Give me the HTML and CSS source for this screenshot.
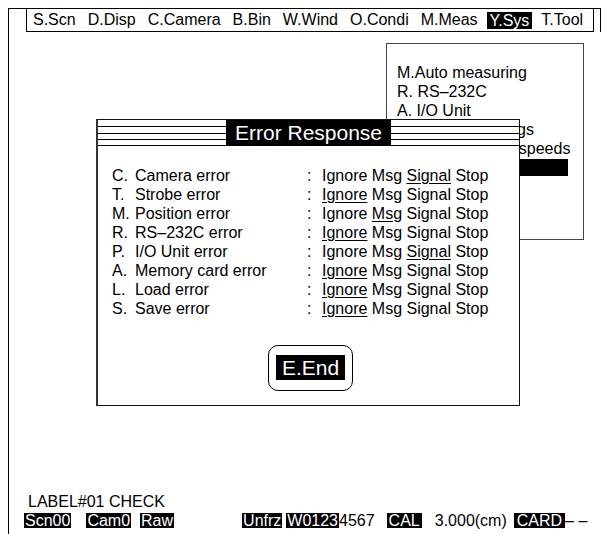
FILE: index.html
```html
<!DOCTYPE html>
<html lang="en">
  <head>
    <meta charset="UTF-8" />
    <meta name="viewport" content="width=device-width, initial-scale=1.0" />
    <title>Error Response</title>
    <link rel="stylesheet" href="styles.css">
  </head>
  <body>
    <div class="screen">
      <div class="header">
        <div class="menu">
          <span>S.Scn</span>
          <span>D.Disp</span>
          <span>C.Camera</span>
          <span>B.Bin</span>
          <span>W.Wind</span>
          <span>O.Condi</span>
          <span>M.Meas</span>
          <span class="active">Y.Sys</span>
          <span>T.Tool</span>
        </div>
      </div>

      <!-- system submenu, partly under the dialog -->
      <div class="submenu">
        <div>M.Auto measuring</div>
        <div>R. RS–232C</div>
        <div>A. I/O Unit</div>
        <div>C. Camera settings</div>
        <div>W. Transmission speeds</div>
        <div class="selected"></div>
      </div>

      <div class="dialog">
        <div class="title-bar">
          <span class="title">Error Response</span>
        </div>
        <div class="dialog-body">
          <div class="rows">
            <span>C.</span><span>Camera error</span><span>:</span>
            <span>Ignore Msg <u>Signal</u> Stop</span>

            <span>T.</span><span>Strobe error</span><span>:</span>
            <span><u>Ignore</u> Msg Signal Stop</span>

            <span>M.</span><span>Position error</span><span>:</span>
            <span>Ignore <u>Msg</u> Signal Stop</span>

            <span>R.</span><span>RS–232C error</span><span>:</span>
            <span><u>Ignore</u> Msg Signal Stop</span>

            <span>P.</span><span>I/O Unit error</span><span>:</span>
            <span>Ignore Msg <u>Signal</u> Stop</span>

            <span>A.</span><span>Memory card error</span><span>:</span>
            <span><u>Ignore</u> Msg Signal Stop</span>

            <span>L.</span><span>Load error</span><span>:</span>
            <span><u>Ignore</u> Msg Signal Stop</span>

            <span>S.</span><span>Save error</span><span>:</span>
            <span><u>Ignore</u> Msg Signal Stop</span>
          </div>
          <div class="actions">
            <div class="end-button"><span>E.End</span></div>
          </div>
        </div>
      </div>

      <div class="status">
        <div class="status-label">LABEL#01 CHECK</div>
        <div class="status-tags">
          <span class="tag scn">Scn00</span>
          <span class="tag cam">Cam0</span>
          <span class="tag raw">Raw</span>
          <span class="tag unfrz">Unfrz</span>
          <span class="tag win">W0123</span><span>4567</span>
          <span class="tag cal">CAL</span>
          <span class="value">3.000(cm)</span>
          <span class="tag card">CARD</span><span>– –</span>
        </div>
      </div>
    </div>
  </body>
</html>
```

FILE: styles.css
```css
body {
  margin: 0;
  background-color: #fff;
  color: #000;
  font-family: "Liberation Sans", Arial, sans-serif;
  font-size: 16px;
}
.screen {
  position: relative;
  display: flex;
  flex-direction: column;
  box-sizing: border-box;
  margin: 8px 0 0 8px;
  width: 593px;
  height: 526px;
  border-top: 1px solid #000;
  border-left: 1px solid #000;
}

/* top menu */
.header {
  height: 23px;
  border-right: 1px solid #000;
}
.menu {
  display: flex;
  align-items: center;
  gap: 12px;
  box-sizing: border-box;
  margin-left: 17px;
  width: 568px;
  height: 23px;
  padding-left: 6px;
  border: 1px solid #000;
  border-top: none;
  line-height: 20px;
}
.menu .active {
  background-color: #000;
  color: #fff;
  padding: 0 3px;
  margin: 0 -3px;
  line-height: 17px;
}

/* submenu behind the dialog */
.submenu {
  box-sizing: border-box;
  margin: 11px 0 0 377px;
  width: 198px;
  height: 197px;
  padding: 19px 15px 0 10px;
  border: 1px solid #444;
  line-height: 19px;
  white-space: nowrap;
}
.submenu .selected {
  margin: 1px 0 0 -4px;
  height: 17px;
  background-color: #000;
}

/* dialog window */
.dialog {
  position: absolute;
  left: 87px;
  top: 110px;
  box-sizing: border-box;
  width: 424px;
  border: 1px solid #111;
  border-left: 2px solid #333;
  background-color: #fff;
}
.title-bar {
  display: flex;
  justify-content: center;
  height: 25px;
  border-bottom: 1px solid #000;
  background: linear-gradient(
    to bottom,
    transparent 6px, #000 6px, #000 7px, transparent 7px,
    transparent 13px, #000 13px, #000 14px, transparent 14px,
    transparent 19px, #000 19px, #000 20px, transparent 20px
  );
}
.title {
  padding: 0 9px;
  background-color: #000;
  color: #fff;
  font-size: 21px;
  line-height: 25px;
}
.dialog-body {
  padding: 20px 0 14px 14px;
}
.rows {
  display: grid;
  grid-template-columns: 23px 172px 15px auto;
  line-height: 19px;
  white-space: nowrap;
}
.rows u {
  text-underline-offset: 2px;
}
.actions {
  display: flex;
  justify-content: center;
  margin-top: 27px;
  padding-right: 10px;
}
.end-button {
  padding: 9px 7px 10px;
  border: 1px solid #000;
  border-radius: 10px;
}
.end-button span {
  display: block;
  padding: 0 6px;
  background-color: #000;
  color: #fff;
  font-size: 21px;
  line-height: 25px;
}

/* status line */
.status {
  margin-top: auto;
  padding: 0 0 6px 15px;
}
.status-label {
  padding-left: 4px;
  line-height: 18px;
  margin-bottom: 2px;
}
.status-tags {
  display: flex;
  line-height: 15px;
  white-space: nowrap;
}
.tag {
  padding: 0 1px;
  background-color: #000;
  color: #fff;
}
.cam { margin-left: 15px; }
.raw { margin-left: 9px; }
.unfrz { margin-left: 68px; }
.win { margin-left: 4px; }
.cal { margin-left: 12px; padding: 0 2px; }
.value { margin-left: 13px; }
.card { margin-left: 7px; padding: 0 3px; }
```
